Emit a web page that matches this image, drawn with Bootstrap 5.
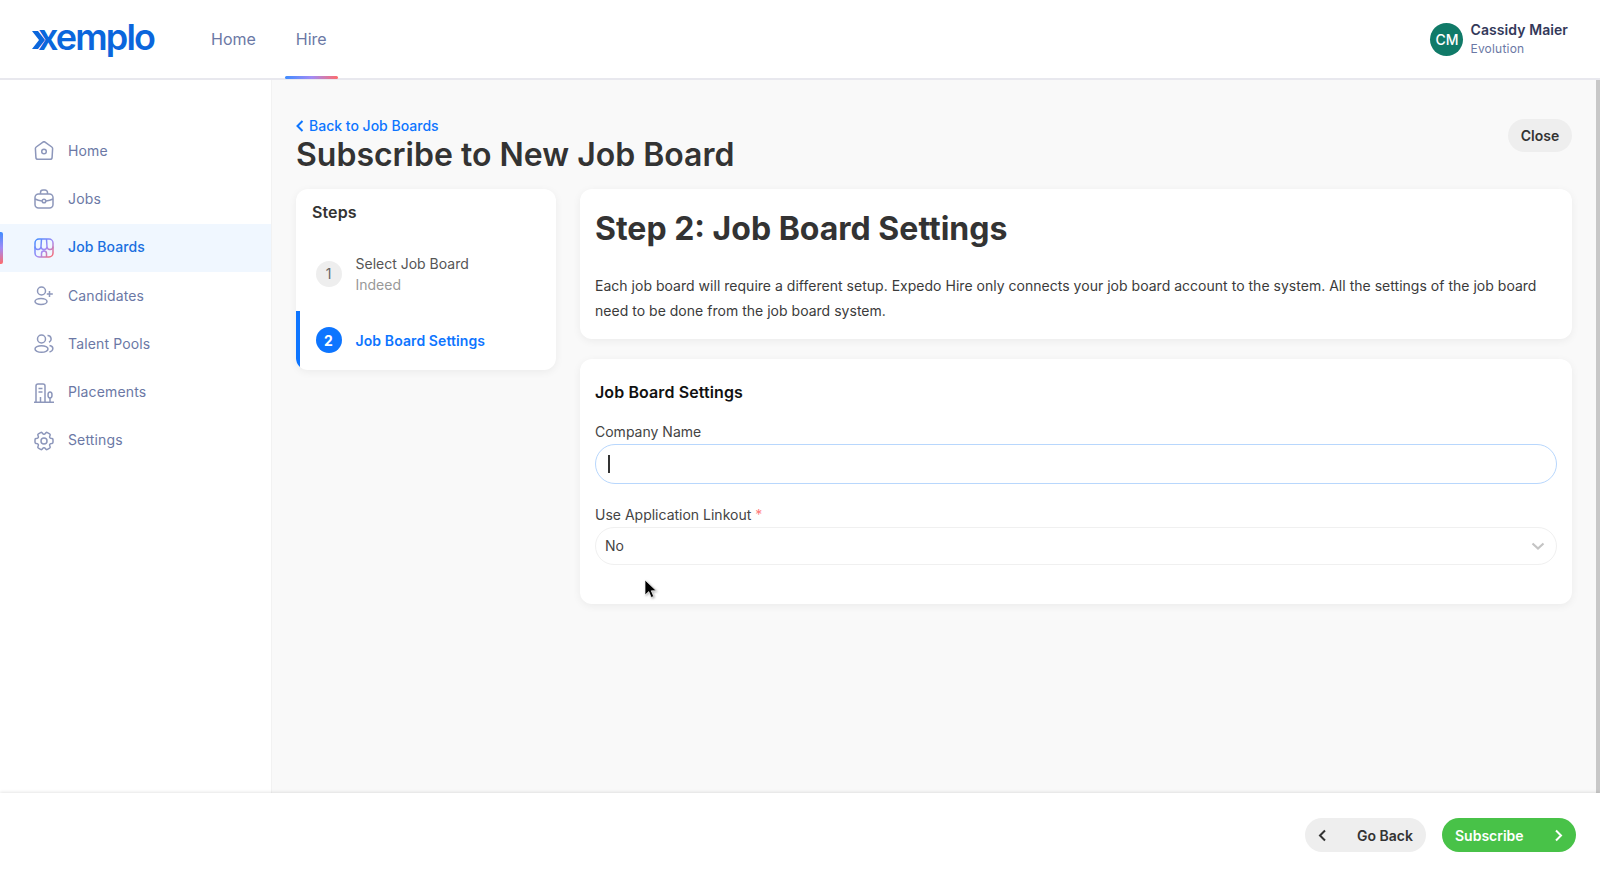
<!DOCTYPE html>
<html lang="en">
<head>
<meta charset="utf-8">
<title>Subscribe to New Job Board</title>
<link href="https://cdn.jsdelivr.net/npm/bootstrap@5.3.0/dist/css/bootstrap.min.css" rel="stylesheet">
<style>
html,body{height:877px;overflow:hidden}
body{font-family:Inter,"Liberation Sans",sans-serif;color:#333;background:#fff;font-size:14px}
.shell{height:877px}
.topbar{height:80px;padding:0;border-bottom:2px solid #e8e8ee;background:#fff;flex-wrap:nowrap}
.brand{width:168px;margin:0 0 0 32px;padding:0;color:#0b66dc;font-size:36px;font-weight:600;letter-spacing:-1.85px;line-height:40px;display:flex;align-items:center;position:relative;top:-2px}
.brand svg{margin-right:-9px;position:relative;top:3px}
.brand:hover{color:#0b66dc}
.topnav{gap:0;height:78px}
.topnav .nav-link{color:#6b78a5;font-size:16px;padding:0 11px;height:78px;line-height:79px;position:relative;margin-right:18px}
.topnav .nav-link.here::after{content:"";position:absolute;left:0;right:0;bottom:-1px;height:3px;border-radius:2px;background:linear-gradient(90deg,#3f8cff,#a18bf5,#ff6b6b)}
.who{margin-right:32px;gap:7px}
.avatar{width:33px;height:33px;border-radius:50%;background:#107a68;color:#fff;font-size:14px;font-weight:500;display:flex;align-items:center;justify-content:center}
.who-name{font-size:14px;font-weight:600;color:#33395a;line-height:19px;letter-spacing:.08px}
.who-org{font-size:12px;color:#6b78a5;line-height:20px;letter-spacing:.2px}
.middle{min-height:0}
.rail{width:272px;flex:none;background:#fff;border-right:1px solid #f2f2f2;padding-top:47px}
.rail .list-group-item{border:0;padding:0 0 2px 34px;height:48.3px;display:flex;align-items:center;gap:14px;color:#6b78a5;font-size:14px;letter-spacing:.14px;background:transparent;position:relative}
.rail .list-group-item svg{flex:none;margin-top:2px}
.rail .list-group-item.on{background:#f0f7ff;color:#1a6fe0;font-weight:500;letter-spacing:.1px}
.rail .list-group-item.on::before{content:"";position:absolute;left:0;top:8px;bottom:8px;width:3px;border-radius:0 2px 2px 0;background:linear-gradient(180deg,#3f8cff,#a18bf5,#ff6b6b)}
.workspace{background:#f9f9f9;min-width:0;padding:36px 24px 0 24px}
.bar-thumb{width:4px;flex:none;background:#c8c8c8}
.backlink{color:#0d75ff;font-size:14px;font-weight:500;text-decoration:none;line-height:20px;display:inline-flex;align-items:center;gap:5px}
.page-title{font-size:32px;font-weight:600;color:#333;line-height:35px;margin:0}
.btn-close-pill{background:#eee;color:#333;border:0;border-radius:17px;height:33px;width:64px;padding:0;font-size:14px;font-weight:600;margin-top:3px}
.columns{gap:24px;margin-top:17px}
.steps{width:260px;flex:none}
.panel{background:#fff;border:0;border-radius:12px;box-shadow:0 2px 8px rgba(0,0,0,.06)}
.steps.panel{height:181px;overflow:hidden}
.steps-title{font-size:16px;font-weight:600;color:#333;padding:14px 16px 0;line-height:19px;height:47px;letter-spacing:.1px}
.step-row{display:flex;align-items:center;gap:14px;padding-left:19.5px}
.step-one{height:75px}
.step-two{height:58px;border-left:4px solid #0d75ff;padding-left:15.5px;color:#0d75ff;font-weight:600;letter-spacing:.1px}
.dot{width:26px;height:26px;border-radius:50%;background:#eee;color:#666;font-size:14px;display:flex;align-items:center;justify-content:center;flex:none}
.step-two .dot{background:#0d75ff;color:#fff;font-weight:700}
.step-main{color:#555;line-height:21px}
.step-sub{color:#999;line-height:21px}
.rightcol{min-width:0;gap:20px}
.intro{height:150px;padding:21px 15px 0}
.intro h2{font-size:32px;font-weight:700;color:#333;line-height:38px;margin:0 0 25px}
.intro p{font-size:14px;line-height:25px;margin:0;color:#3b3b3b;letter-spacing:.02px}
.formcard{height:245px;padding:24px 15px 0}
.formcard h3{font-size:16px;font-weight:600;color:#111;line-height:19px;margin:0 0 21px;letter-spacing:.1px}
.formcard .form-label{font-size:14px;line-height:17px;color:#444;margin:0 0 4px;display:block}
.req{color:#ff7b7b}
.field{position:relative}
.formcard .form-control{height:40px;border-radius:20px;border:1px solid #b8d7fd;box-shadow:none;background:#fff;margin-bottom:22px}
.caret-mark{position:absolute;left:13px;top:11px;width:1.5px;height:18px;background:#333}
.formcard .form-select{height:38px;border-radius:19px;border:1px solid #f0f0f0;padding:0 30px 2px 9px;font-size:14px;color:#444;background-color:#fff;background-position:right 11px center;background-size:14px 10px;background-image:url("data:image/svg+xml,%3csvg xmlns='http://www.w3.org/2000/svg' viewBox='0 0 14 10'%3e%3cpath fill='none' stroke='%23c4c4c4' stroke-width='2.2' d='M1.5 2.5 7 7.5l5.5-5'/%3e%3c/svg%3e")}
.pointer{position:absolute;left:644px;top:579px;z-index:5;filter:drop-shadow(1px 1px 1px rgba(0,0,0,.3))}
.foot{height:84px;flex:none;background:#fff;box-shadow:0 -1px 3px rgba(0,0,0,.1);position:relative;z-index:2;padding:0 24px 0 0;gap:16px}
.pillbtn{height:34px;border:0;border-radius:17px;font-size:14px;font-weight:600;padding:0 13px;display:flex;align-items:center;justify-content:space-between}
.pill-back{width:121px;background:#eee;color:#333}
.pill-go{width:134px;background:#48c248;color:#fff}
.pill-back:hover{background:#eee;color:#333}
.pill-go:hover{background:#48c248;color:#fff}
</style>
</head>
<body>
<div class="shell d-flex flex-column position-relative">
  <nav class="navbar topbar d-flex align-items-center">
    <div class="d-flex align-items-center">
      <a class="navbar-brand brand" href="#"><svg width="15" height="20" viewBox="0 0 15 20" aria-hidden="true"><path fill="#0b66dc" d="M0 1h6l7 9-7 9H0l7-9z"/></svg>xemplo</a>
      <ul class="nav topnav">
        <li class="nav-item"><a class="nav-link" href="#">Home</a></li>
        <li class="nav-item"><a class="nav-link here" href="#">Hire</a></li>
      </ul>
    </div>
    <div class="who d-flex align-items-center">
      <div class="avatar">CM</div>
      <div>
        <div class="who-name">Cassidy Maier</div>
        <div class="who-org">Evolution</div>
      </div>
    </div>
  </nav>
  <div class="middle d-flex flex-grow-1">
    <aside class="rail">
      <div class="list-group list-group-flush">
        <a class="list-group-item" href="#"><svg width="20" height="20" viewBox="0 0 20 20" fill="none" stroke="#8d97bb" stroke-width="1.5"><path d="M8.6 1.4 2.2 6a2 2 0 0 0-.8 1.7l.5 8.7a2 2 0 0 0 2 1.9h12.2a2 2 0 0 0 2-1.9l.5-8.7a2 2 0 0 0-.8-1.7l-6.400-4.600a2 2 0 0 0-2.800 0z"/><circle cx="10" cy="10.500" r="2.300"/></svg>Home</a>
        <a class="list-group-item" href="#"><svg width="20" height="20" viewBox="0 0 20 20" fill="none" stroke="#8d97bb" stroke-width="1.5"><rect x="1" y="5" width="18" height="14" rx="3.500"/><path d="M6.500 5V3.500a2.500 2.500 0 0 1 2.500-2.500h2a2.500 2.500 0 0 1 2.500 2.500V5M1 10c2.500 1.300 5 1.800 7 2M19 10c-2.500 1.300-5 1.800-7 2"/><circle cx="10" cy="12" r="1.800"/></svg>Jobs</a>
        <a class="list-group-item on" href="#"><svg width="20" height="20" viewBox="0 0 20 20" fill="none" stroke="url(#shopfill)" stroke-width="1.5"><defs><linearGradient id="shopfill" gradientUnits="userSpaceOnUse" x1="1" y1="1" x2="19" y2="19"><stop offset="0" stop-color="#3f8cff"/><stop offset=".55" stop-color="#a18bf5"/><stop offset="1" stop-color="#ff6b6b"/></linearGradient></defs><rect x="1" y="1" width="18" height="18" rx="4"/><path d="M1 8.500a3 3 0 0 0 6 0 3 3 0 0 0 6 0 3 3 0 0 0 6 0M7 8.500 7.500 1M13 8.500 12.500 1M7.500 19v-3.500a2.500 2.500 0 0 1 5 0V19"/></svg>Job Boards</a>
        <a class="list-group-item" href="#"><svg width="20" height="20" viewBox="0 0 20 20" fill="none" stroke="#8d97bb" stroke-width="1.5"><circle cx="7.500" cy="5" r="4"/><ellipse cx="7" cy="15.500" rx="6" ry="3"/><path d="M15.500 5v6M12.800 8h6" /></svg>Candidates</a>
        <a class="list-group-item" href="#"><svg width="20" height="20" viewBox="0 0 20 20" fill="none" stroke="#8d97bb" stroke-width="1.5"><circle cx="7.500" cy="5" r="4"/><ellipse cx="7.500" cy="15" rx="6.500" ry="3.300"/><path d="M13.500 1.500a3.500 3.500 0 0 1 1.500 6.700M15.500 11.500c2.500.5 3.500 2 3.300 3.500-.2 1.300-1.300 2.500-3.300 3"/></svg>Talent Pools</a>
        <a class="list-group-item" href="#"><svg width="20" height="20" viewBox="0 0 20 20" fill="none" stroke="#8d97bb" stroke-width="1.5"><path d="M2 19V3a2 2 0 0 1 2-2h5a2 2 0 0 1 2 2v16M0 19.300h20M4.500 5.500h4M4.500 9h4M6.500 19v-5"/><ellipse cx="16" cy="12" rx="2" ry="3"/><path d="M16 15v4"/></svg>Placements</a>
        <a class="list-group-item" href="#"><svg width="20" height="20" viewBox="2 2 20 20" fill="none" stroke="#8d97bb" stroke-width="1.5"><g transform="rotate(90 12 12)"><path d="M9.594 3.940c.09-.542.56-.94 1.110-.94h2.593c.55 0 1.020.398 1.110.94l.213 1.281c.063.374.313.686.645.870.074.04.147.083.22.127.325.196.72.257 1.075.124l1.217-.456a1.125 1.125 0 0 1 1.370.49l1.296 2.247a1.125 1.125 0 0 1-.26 1.431l-1.003.827c-.293.241-.438.613-.43.992a7.723 7.723 0 0 1 0 .255c-.008.378.137.75.43.991l1.004.827c.424.35.534.955.26 1.430l-1.298 2.247a1.125 1.125 0 0 1-1.369.491l-1.217-.456c-.355-.133-.75-.072-1.076.124a6.470 6.470 0 0 1-.22.128c-.331.183-.581.495-.644.869l-.213 1.281c-.09.543-.56.94-1.110.94h-2.594c-.55 0-1.019-.398-1.110-.94l-.213-1.281c-.062-.374-.312-.686-.644-.87a6.520 6.520 0 0 1-.22-.127c-.325-.196-.72-.257-1.076-.124l-1.217.456a1.125 1.125 0 0 1-1.369-.49l-1.297-2.247a1.125 1.125 0 0 1 .26-1.431l1.004-.827c.292-.24.437-.613.43-.991a6.932 6.932 0 0 1 0-.255c.007-.38-.138-.751-.43-.992l-1.004-.827a1.125 1.125 0 0 1-.26-1.430l1.297-2.247a1.125 1.125 0 0 1 1.370-.491l1.216.456c.356.133.751.072 1.076-.124.072-.044.146-.086.22-.128.332-.183.582-.495.644-.869l.214-1.280z"/><circle cx="12" cy="12" r="3"/></g></svg>Settings</a>
      </div>
    </aside>
    <main class="workspace flex-grow-1">
      <div class="d-flex justify-content-between align-items-start">
        <div>
          <a class="backlink" href="#"><svg width="8" height="12" viewBox="0 0 8 12" fill="none" stroke="#0d75ff" stroke-width="2"><path d="M6.500 1 1.500 6l5 5"/></svg>Back to Job Boards</a>
          <h1 class="page-title">Subscribe to New Job Board</h1>
        </div>
        <button class="btn btn-close-pill" type="button">Close</button>
      </div>
      <div class="columns d-flex align-items-start">
        <section class="steps panel card">
          <div class="steps-title">Steps</div>
          <div class="step-row step-one">
            <div class="dot">1</div>
            <div><div class="step-main">Select Job Board</div><div class="step-sub">Indeed</div></div>
          </div>
          <div class="step-row step-two">
            <div class="dot">2</div>
            <div>Job Board Settings</div>
          </div>
        </section>
        <div class="rightcol d-flex flex-column flex-grow-1">
          <section class="panel card intro">
            <h2>Step 2: Job Board Settings</h2>
            <p>Each job board will require a different setup. Expedo Hire only connects your job board account to the system. All the settings of the job board need to be done from the job board system.</p>
          </section>
          <section class="panel card formcard">
            <h3>Job Board Settings</h3>
            <label class="form-label" for="cname">Company Name</label>
            <div class="field">
              <input class="form-control" id="cname" type="text">
              <span class="caret-mark"></span>
            </div>
            <label class="form-label" for="link">Use Application Linkout <span class="req">*</span></label>
            <select class="form-select" id="link"><option>No</option></select>
          </section>
        </div>
      </div>
    </main>
    <div class="bar-thumb"></div>
  </div>
  <footer class="foot d-flex align-items-center justify-content-end">
    <button class="btn pillbtn pill-back" type="button"><svg width="9" height="13" viewBox="0 0 9 13" fill="none" stroke="#333" stroke-width="2"><path d="M7 1.500 2 6.500l5 5"/></svg>Go Back</button>
    <button class="btn pillbtn pill-go" type="button">Subscribe<svg width="9" height="13" viewBox="0 0 9 13" fill="none" stroke="#fff" stroke-width="2"><path d="M2 1.500 7 6.500l-5 5"/></svg></button>
  </footer>
  <svg class="pointer" width="13" height="20" viewBox="0 0 13 20"><path d="M1 1v15l3.800-3.400L7.200 18.500l2.500-1.100-2.400-5.600h5z" fill="#000" stroke="#fff" stroke-width=".7"/></svg>
</div>
<script src="https://cdn.jsdelivr.net/npm/bootstrap@5.3.0/dist/js/bootstrap.bundle.min.js"></script>
</body>
</html>
